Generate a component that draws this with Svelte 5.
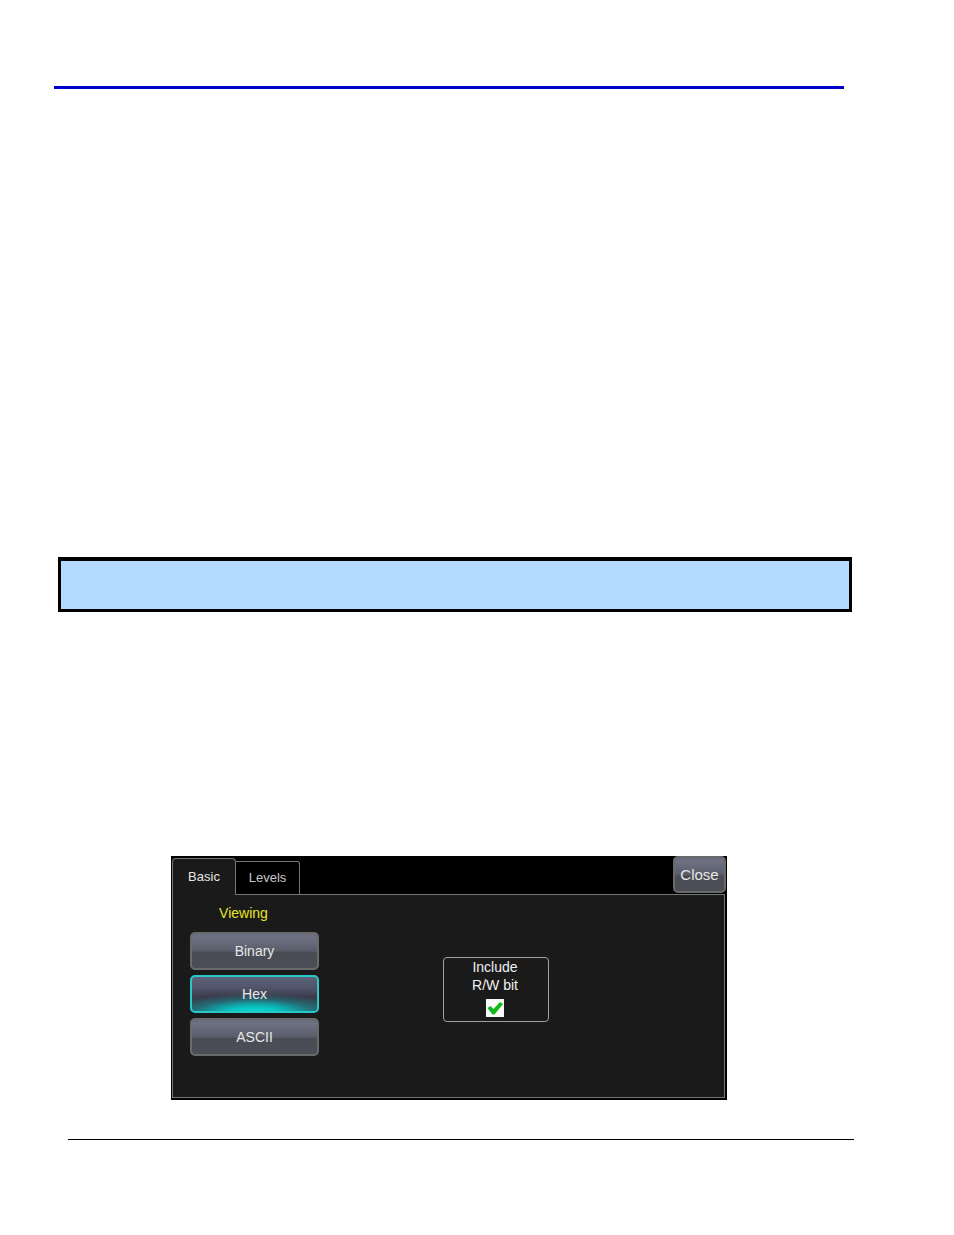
<script>
    let tabs = ["Basic", "Levels"];
    let formats = ["Binary", "Hex", "ASCII"];

    let activeTab = "Basic";
    let viewing = "Hex";
    let includeRw = true;
    let open = true;
</script>

<main>
    <hr class="header-rule" />

    <aside class="note" aria-label="Note"></aside>

    <div class="figure">
        {#if open}
            <section class="dialog">
                <header class="top">
                    <div class="tabs" role="tablist">
                        {#each tabs as tab}
                            <button
                                type="button"
                                role="tab"
                                class="tab"
                                class:active={activeTab === tab}
                                aria-selected={activeTab === tab}
                                on:click={() => (activeTab = tab)}
                            >
                                {tab}
                            </button>
                        {/each}
                    </div>
                    <button
                        type="button"
                        class="key close"
                        on:click={() => (open = false)}
                    >
                        Close
                    </button>
                </header>

                <div class="panel">
                    {#if activeTab === "Basic"}
                        <div
                            class="viewing"
                            role="group"
                            aria-labelledby="viewing-title"
                        >
                            <h2 id="viewing-title">Viewing</h2>
                            {#each formats as format}
                                <button
                                    type="button"
                                    class="key"
                                    class:selected={viewing === format}
                                    aria-pressed={viewing === format}
                                    on:click={() => (viewing = format)}
                                >
                                    {format}
                                </button>
                            {/each}
                        </div>

                        <div class="option">
                            <label for="include-rw">Include<br />R/W bit</label>
                            <span class="check">
                                <input
                                    id="include-rw"
                                    type="checkbox"
                                    bind:checked={includeRw}
                                />
                                {#if includeRw}
                                    <svg viewBox="0 0 18 18" aria-hidden="true">
                                        <path
                                            d="M1.5 9 L4.5 7 L7.5 10 L14 3 L17 5 L8.5 15.5 L6.5 15.5 Z"
                                        />
                                    </svg>
                                {/if}
                            </span>
                        </div>
                    {/if}
                </div>
            </section>
        {/if}
    </div>

    <hr class="footer-rule" />
</main>

<style>
    :global(body) {
        background: #ffffff;
    }

    main {
        padding: 86px 110px 95px 54px;
        font-family: "Liberation Sans", Arial, sans-serif;
        font-size: 14px;
        line-height: 18px;
    }

    hr {
        margin: 0;
        border: none;
    }

    .header-rule {
        height: 3px;
        background: #0000cc;
    }

    .note {
        box-sizing: border-box;
        min-height: 55px;
        margin: 468px -8px 0 4px;
        border: 3px solid #000000;
        border-top-width: 4px;
        background: #b4daff;
    }

    .figure {
        display: flex;
        justify-content: center;
        min-height: 244px;
        margin-top: 244px;
    }

    .footer-rule {
        height: 1px;
        margin: 39px -10px 0 14px;
        background: #000000;
    }

    /* Dialog */
    .dialog {
        box-sizing: border-box;
        display: flex;
        flex-direction: column;
        width: 100%;
        max-width: 556px;
        padding: 0 2px 2px 1px;
        background: #000000;
    }

    .top {
        display: flex;
        justify-content: space-between;
        align-items: flex-start;
        height: 38px;
        margin-right: -1px;
    }

    .tabs {
        display: flex;
        align-items: flex-end;
        height: 39px;
    }

    button {
        font-family: inherit;
        line-height: inherit;
        cursor: pointer;
    }

    .tab {
        box-sizing: border-box;
        width: 64px;
        height: 34px;
        padding: 0;
        border: 1px solid #777777;
        border-left: none;
        border-radius: 0 3px 0 0;
        background: #000000;
        color: #c8c8c8;
        font-size: 13px;
    }

    .tab.active {
        z-index: 1;
        height: 37px;
        border-left: 1px solid #777777;
        border-bottom: none;
        border-radius: 4px 4px 0 0;
        background: #1a1a1a;
        color: #e6e6e6;
    }

    .panel {
        box-sizing: border-box;
        display: flex;
        align-items: flex-start;
        gap: 124px;
        min-height: 204px;
        padding: 9px 17px;
        border: 1px solid #777777;
        background: #1a1a1a;
    }

    .key {
        box-sizing: border-box;
        height: 38px;
        padding: 0;
        border: 2px solid #686a6c;
        border-radius: 5px;
        background: linear-gradient(
                #666a7c 0%,
                #6e7183 15%,
                #595c69 50%,
                #4a4c55 54%,
                #4c4e57 100%
            )
            border-box;
        color: #e8e8e8;
        font-size: 14px;
    }

    .close {
        width: 53px;
        height: 37px;
        font-size: 15px;
    }

    .viewing {
        display: flex;
        flex-direction: column;
        gap: 5px;
        width: 129px;
    }

    h2 {
        margin: 0 22px 5px 0;
        color: #e6e620;
        font-size: 14px;
        font-weight: 400;
        text-align: center;
    }

    .key.selected {
        border-color: #28c8c6;
        background:
            radial-gradient(
                    ellipse 65% 52% at 50% 100%,
                    #00e2dc 0%,
                    rgba(4, 200, 198, 0.9) 35%,
                    rgba(20, 140, 148, 0.45) 70%,
                    rgba(40, 90, 100, 0) 100%
                )
                border-box,
            linear-gradient(#5f647c 0%, #50546a 35%, #3a3b4a 58%, #2c626c 100%)
                border-box;
    }

    .option {
        box-sizing: border-box;
        display: flex;
        flex-direction: column;
        align-items: center;
        gap: 5px;
        width: 106px;
        height: 65px;
        margin-top: 53px;
        padding-right: 2px;
        border: 1px solid #a0a0a0;
        border-radius: 4px;
        color: #f0f0f0;
        text-align: center;
    }

    .check {
        display: grid;
        width: 18px;
        height: 18px;
    }

    .check input,
    .check svg {
        grid-area: 1 / 1;
        width: 18px;
        height: 18px;
        margin: 0;
    }

    .check input {
        appearance: none;
        background: #fafafa;
    }

    .check svg {
        fill: #10b818;
        pointer-events: none;
    }
</style>
